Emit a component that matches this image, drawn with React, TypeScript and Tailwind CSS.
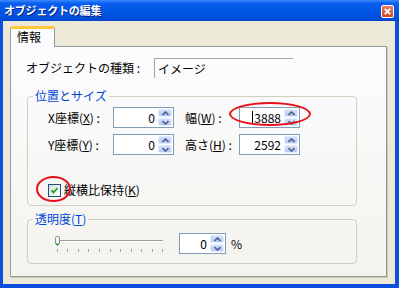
import React from "react";

function Arrow({ up }: { up?: boolean }) {
  return (
    <svg width="7" height="5" viewBox="0 0 7 5" className="block">
      <path
        d={up ? "M0.5 4 L3.5 1 L6.5 4" : "M0.5 1 L3.5 4 L6.5 1"}
        fill="none"
        stroke="#4d6185"
        strokeWidth="1.6"
      />
    </svg>
  );
}

function Spin({ value, className, caret }: { value: string; className: string; caret?: boolean }) {
  return (
    <div className={`flex h-[21px] border border-[#7f9db9] bg-white ${className}`}>
      <div className="flex flex-1 items-center justify-end pr-[2px] text-[12px] leading-[14px] text-black">
        {caret && <span className="mr-px h-[13px] w-px bg-black" />}
        {value}
      </div>
      <div className="flex w-[16px] flex-col gap-px p-px">
        <div className="flex flex-1 items-center justify-center rounded-[2px] border border-[#e3ebfc] bg-gradient-to-b from-[#d5e1fb] to-[#b5c8f5]">
          <Arrow up />
        </div>
        <div className="flex flex-1 items-center justify-center rounded-[2px] border border-[#e3ebfc] bg-gradient-to-b from-[#d5e1fb] to-[#b5c8f5]">
          <Arrow />
        </div>
      </div>
    </div>
  );
}

function Slider() {
  const ticks = [3, 13, 24, 34, 45, 56, 66, 77, 87, 98, 108];
  return (
    <svg width="111" height="20" viewBox="0 0 111 20" className="block">
      <line x1="6" y1="7.5" x2="109" y2="7.5" stroke="#9c9c9c" />
      <line x1="6" y1="8.5" x2="109" y2="8.5" stroke="#ffffff" />
      {ticks.map((x) => (
        <line key={x} x1={x + 0.5} y1="16" x2={x + 0.5} y2="19" stroke="#a0a0a0" />
      ))}
      <path d="M1.5 4.5 Q1.5 3.5 2.5 3.5 L4.5 3.5 Q5.5 3.5 5.5 4.5 L5.5 10.5 L3.5 12.5 L1.5 10.5 Z" fill="#f4f4f0" stroke="#8a8f8c" />
      <path d="M2 10.5 L3.5 12 L5 10.5" fill="none" stroke="#21a121" strokeWidth="1.2" />
    </svg>
  );
}

export default function App() {
  return (
    <div className="relative flex h-[288px] w-[399px] flex-col overflow-hidden whitespace-nowrap bg-[#0c4fdc] font-['Noto_Sans_CJK_JP',sans-serif]">
      {/* Title bar */}
      <div className="flex h-[21px] items-start bg-[linear-gradient(to_bottom,#3d8bff_0%,#0a5fef_15%,#0057e6_50%,#0050dc_85%,#0046c8_100%)] pl-[4px] pr-[5px]">
        <div className="mt-[3px] text-[11px] font-bold leading-[15px] tracking-[-0.2px] text-white [text-shadow:1px_1px_0_#0a1e80]">
          オブジェクトの編集
        </div>
        <div className="ml-auto mt-[5px] flex h-[13px] w-[13px] items-center justify-center rounded-[2px] border border-white bg-gradient-to-b from-[#e9805e] to-[#d2431c]">
          <svg width="7" height="7" viewBox="0 0 7 7" className="block">
            <path d="M0.8 0.8 L6.2 6.2 M6.2 0.8 L0.8 6.2" stroke="#fff" strokeWidth="1.8" />
          </svg>
        </div>
      </div>

      {/* Body */}
      <div className="mb-[4px] ml-[3px] mr-[4px] flex-1 bg-[#ece9d8] pl-[7px] pt-[5px]">
        {/* Tab */}
        <div className="relative z-10 -mb-px h-[21px] w-[45px] rounded-t-[3px] border-x border-t-[3px] border-x-[#919b9c] border-t-[#ffc83c] bg-[#fcfcfe] pl-[6px] text-[12px] leading-[16px] text-black">
          情報
        </div>

        {/* Panel */}
        <div className="h-[231px] w-[377px] border border-[#919b9c] bg-gradient-to-b from-[#fcfcfe] to-[#f4f3ee] pt-[11px] shadow-[1px_1px_0_#c9c6b5]">
          <div className="flex items-center text-[12px] leading-[14px] text-black">
            <div className="w-[143px] pl-[15px]">オブジェクトの種類 :</div>
            <div className="flex h-[20px] w-[139px] items-center border-l border-t border-[#a5a5a5] pl-[3px]">イメージ</div>
          </div>

          <fieldset className="ml-[16px] mt-[11px] h-[117px] w-[330px] rounded-[4px] border border-[#d0d0bf] text-[12px] leading-[14px] text-black">
            <legend className="ml-[5px] px-[2px] text-[#0046d5]">位置とサイズ</legend>
            <div className="pl-[20px] pt-[4px]">
              <div className="flex items-center">
                <div className="w-[65px]">X座標(<u>X</u>) :</div>
                <Spin value="0" className="w-[61px]" />
                <div className="ml-[11px] w-[54px]">幅(<u>W</u>) :</div>
                <Spin value="3888" className="w-[61px]" caret />
              </div>
              <div className="mt-[6px] flex items-center">
                <div className="w-[65px]">Y座標(<u>Y</u>) :</div>
                <Spin value="0" className="w-[61px]" />
                <div className="ml-[11px] w-[54px]">高さ(<u>H</u>) :</div>
                <Spin value="2592" className="w-[61px]" />
              </div>
              <div className="mt-[28px] flex items-center gap-[3px]">
                <div className="flex h-[13px] w-[13px] items-center justify-center border border-[#1c5180] bg-gradient-to-br from-[#dcdcd7] to-white">
                  <svg width="7" height="7" viewBox="0 0 7 7" className="block">
                    <path d="M0.5 3.5 L2.5 5.5 L6.5 1" fill="none" stroke="#21a121" strokeWidth="1.8" />
                  </svg>
                </div>
                <div>縦横比保持(<u>K</u>)</div>
              </div>
            </div>
          </fieldset>

          <fieldset className="ml-[16px] mt-[6px] h-[52px] w-[330px] rounded-[4px] border border-[#d0d0bf] text-[12px] leading-[14px] text-black">
            <legend className="ml-[5px] px-[2px] text-[#0046d5]">透明度(<u>T</u>)</legend>
            <div className="flex items-start pl-[26px] pt-[7px]">
              <Slider />
              <Spin value="0" className="ml-[14px] w-[47px]" />
              <div className="ml-[5px] self-center">%</div>
            </div>
          </fieldset>
        </div>
      </div>

      {/* Red annotation circles */}
      <div className="absolute left-[229px] top-[102px] h-[24px] w-[82px] rounded-[50%] border-2 border-[#e8101a]" />
      <div className="absolute left-[36px] top-[176px] h-[26px] w-[35px] rounded-[50%] border-2 border-[#e8101a]" />
    </div>
  );
}
